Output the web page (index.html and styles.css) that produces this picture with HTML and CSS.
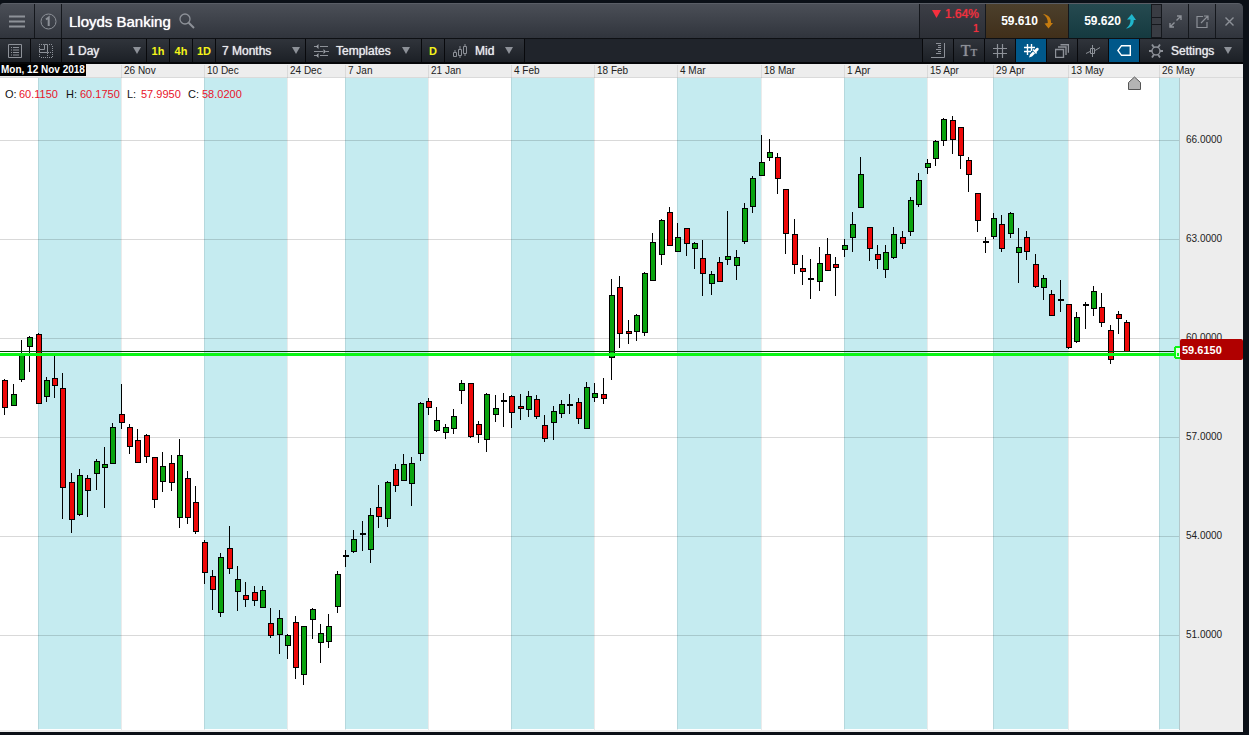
FILE: index.html
```html
<!DOCTYPE html>
<html lang="en">

<head>
  <meta charset="UTF-8">
  <meta name="viewport" content="width=device-width, initial-scale=1.0">
  <title>Lloyds Banking</title>
  <link rel="stylesheet" href="styles.css">
</head>

<body>

  <div class="platform">
    <header class="titlebar">
      <button class="cell menu" aria-label="Menu">
        <svg width="16" height="13" viewBox="0 0 16 13"><path d="M0 1.5h16M0 6.5h16M0 11.5h16" stroke-width="2" /></svg>
      </button>
      <button class="cell link-group" aria-label="Link group 1">
        <svg width="17" height="17" viewBox="0 0 17 17"><circle cx="8.5" cy="8.5" r="7.5" /><path d="M6 6.5l2.7-2V13" stroke-width="2" /></svg>
      </button>
      <div class="cell product">
        <h1>Lloyds Banking</h1>
        <button class="search" aria-label="Search">
          <svg width="16" height="16" viewBox="0 0 16 16"><circle cx="6" cy="6" r="5" stroke-width="1.3" /><path d="M9.7 9.7l5.3 5.3" stroke-width="2" /></svg>
        </button>
      </div>
      <div class="change">
        <span><svg width="9" height="8" viewBox="0 0 9 8"><path d="M0 0h9L4.500 8z" /></svg>1.64%</span>
        <span>1</span>
      </div>
      <button class="price sell">59.610
        <svg width="10" height="15" viewBox="0 0 10 15"><path d="M0 0C5 .500 8.500 4 8 9H10L5.500 14.500L1.500 9.500L4.800 9C5 5 3 2 0 0z" /></svg>
      </button>
      <button class="price buy">59.620
        <svg width="10" height="15" viewBox="0 0 10 15"><path d="M0 14.500C5 14 8 10.500 7.700 6H10L5.800 0L1 5.500H4.500C4.700 9.500 3 12.500 0 14.500z" /></svg>
      </button>
      <div class="grip"><i></i><i></i><i></i><i></i><i></i></div>
      <button class="cell window" aria-label="Expand">
        <svg width="13" height="13" viewBox="0 0 13 13"><path d="M7.500 5.500l4-4M8 1h4v4M5.500 7.500l-4 4M1 8v4h4" stroke-width="1.4" /></svg>
      </button>
      <button class="cell window" aria-label="Pop out">
        <svg width="13" height="13" viewBox="0 0 13 13"><path d="M7 1.500H1v11h10V7M5 8l6.500-6.500M8 1h4v4" stroke-width="1.2" /></svg>
      </button>
      <button class="cell window" aria-label="Close">
        <svg width="9" height="9" viewBox="0 0 9 9"><path d="M.5 .5l8 8M8.500 .5l-8 8" stroke-width="1.4" /></svg>
      </button>
    </header>

    <nav class="toolbar">
      <button class="tool" aria-label="Watch list">
        <svg width="14" height="14" viewBox="0 0 14 14"><path d="M.5.5h13v13H.5zM3 3.500h1M5 3.500h6M3 6h1M5 6h6M3 8.500h1M5 8.500h6M3 11h1M5 11h6" /></svg>
      </button>
      <button class="tool" aria-label="Chart layout">
        <svg width="14" height="14" viewBox="0 0 14 14"><path d="M5.500.500h3v8h-8v-3h5z" /><path d="M0 .500h5M.500 2v3M10 .500h4M13.500 2v12M.500 10v4M2 13.500h11M8.500 9v4M9 8.500h4" stroke-dasharray="1 1" /></svg>
      </button>
      <label class="dropdown interval">
        <select aria-label="Interval"><option>1 Day</option><option>4 Hours</option></select>
        <span class="arrow"></span>
      </label>
      <button class="short">1h</button>
      <button class="short">4h</button>
      <button class="short">1D</button>
      <label class="dropdown period">
        <select aria-label="Period"><option>7 Months</option><option>1 Year</option></select>
        <span class="arrow"></span>
      </label>
      <button class="dropdown templates">
        <svg width="15" height="14" viewBox="0 0 15 14"><path d="M0 2.500h3M6 2.500h8M0 7.500h9M12 7.500h3M0 11.500h3M6 11.500h8" stroke-width="1.2" /><path d="M4.500 0v5L2 2.500zM9.500 5v5l2.500-2.500zM4.500 9v5L2 11.500z" fill="#9da1a8" stroke="none" /></svg>
        <span>Templates</span>
        <span class="arrow"></span>
      </button>
      <button class="short">D</button>
      <label class="dropdown mid">
        <svg width="15" height="14" viewBox="0 0 15 14"><path d="M.5 8.500h3v4h-3zM2 6v2M5.500 5.500h3v6h-3zM7 2v3M7 12v2M10.500 2.500h3v7h-3zM12 0v2M12 10v2" /></svg>
        <select aria-label="Price type"><option>Mid</option><option>Bid</option></select>
        <span class="arrow"></span>
      </label>
      <div class="spacer"></div>
      <button class="tool" aria-label="Price scale">
        <svg width="14" height="15" viewBox="0 0 14 15"><path d="M5 .500h5M7 2.500h3M7 4.500h3M5 6.500h5M7 8.500h3M5 10.500h5M0 14.500h13.500V0" /></svg>
      </button>
      <button class="tool text-tool" aria-label="Text">T<small>T</small></button>
      <button class="tool" aria-label="Grid">
        <svg width="14" height="14" viewBox="0 0 14 14"><path d="M4.500 0v14M9.500 0v14M0 4.500h14M0 9.500h14" stroke-width="1.2" /></svg>
      </button>
      <button class="tool active" aria-label="Grid snapping">
        <svg width="15" height="14" viewBox="0 0 15 14"><path d="M3.500 0v11M7.500 0v7M0 3.500h11M0 7.500h7" stroke-width="1.4" /><path d="M5 13.500l1-3 3-3 2 2-3 3zM8.500 6l1-1 1 1L12.500 4c2-1 2.500 1 2 2l-2 2 .5 1-1 1z" fill="#fff" stroke="none" /></svg>
      </button>
      <button class="tool" aria-label="Layers">
        <svg width="14" height="14" viewBox="0 0 14 14"><path d="M.5 5.500h8v8h-8zM3 3h8v8M5.500.700h8v8" stroke-width="1.4" /></svg>
      </button>
      <button class="tool" aria-label="Crosshair">
        <svg width="14" height="14" viewBox="0 0 14 14"><path d="M4.500 4.500h4v5h-4zM6.500 1v12M0 9.500l4-2M9 6.500l5-3" /></svg>
      </button>
      <button class="tool active" aria-label="Price label">
        <svg width="14" height="11" viewBox="0 0 14 11"><path d="M4.500.700h8.800v9.600H4.500L.900 5.500z" stroke-width="1.4" /></svg>
      </button>
      <button class="dropdown settings">
        <svg width="14" height="14" viewBox="0 0 14 14"><circle cx="7" cy="7" r="4" stroke-width="1.4" /><path d="M0 7h3M11 7h3M3 .500l2 3M11 .500l-2 3M3 13.500l2-3M11 13.500l-2-3" stroke-width="1.8" /></svg>
        <span>Settings</span>
        <span class="arrow"></span>
      </button>
    </nav>

    <main>
      <svg class="chart" id="chart" viewBox="0 64 1243 668" role="img" aria-label="Lloyds Banking daily candles"></svg>
    </main>
  </div>

  <script src="chart.js"></script>

</body>

</html>
```

FILE: styles.css
```css
* {
  margin: 0;
  padding: 0;
  box-sizing: border-box;
}

body {
  font-family: "Liberation Sans", Arial, sans-serif;
  font-size: 12px;
  background-color: #0b1017;
  color: #e8eaed;
}

button,
select {
  font: inherit;
  color: inherit;
  background: none;
  border: none;
  cursor: pointer;
}

svg {
  display: block;
  fill: none;
  stroke: #8d9198;
}

.platform {
  padding: 3px 6px 0 0;
}

/* Title bar */
.titlebar {
  display: flex;
  height: 36px;
  background: linear-gradient(#4b4f57, #30343c);
  border-top: 1px solid #5a5e66;
  border-bottom: 1px solid #0e1014;
  border-radius: 4px 5px 0 0;
}

.cell {
  display: flex;
  align-items: center;
  justify-content: center;
  border-right: 1px solid #14171c;
}

.menu {
  width: 35px;
}

.link-group {
  width: 27px;
}

.product {
  flex: 1;
  justify-content: flex-start;
  gap: 8px;
  padding-left: 7px;
}

h1 {
  font-size: 15px;
  font-weight: 400;
  color: #fff;
  text-shadow: 0 0 1px #fff;
}

.change {
  width: 65px;
  padding: 3px 6px 0 0;
  line-height: 14px;
  text-align: right;
  color: #f5303e;
  background: linear-gradient(#3c3e46, #2c2f36);
  text-shadow: 0 0 1px #f5303e;
}

.change span {
  display: block;
}

.change svg {
  display: inline-block;
  margin-right: 4px;
  fill: #f5303e;
  stroke: none;
}

.change span + span {
  font-size: 11px;
}

.price {
  display: flex;
  align-items: center;
  justify-content: center;
  gap: 5px;
  width: 83px;
  font-weight: 700;
  color: #fff;
  border-left: 1px solid #14171c;
}

.price svg {
  stroke: none;
}

.sell {
  background: linear-gradient(#4c402c, #402f1a);
}

.sell svg {
  fill: #c67c10;
}

.buy {
  background: linear-gradient(#264a50, #153a40);
}

.buy svg {
  fill: #20b6cc;
}

.grip {
  display: flex;
  flex-direction: column;
  justify-content: space-evenly;
  width: 11px;
  padding: 0 1px;
  background-color: #15181d;
}

.grip i {
  height: 6px;
  background-color: #393c43;
}

.window {
  width: 27px;
}

.window:last-child {
  border-right: none;
}

/* Toolbar */
.toolbar {
  display: flex;
  height: 25px;
  background-color: #20242b;
  border-bottom: 2px solid #050608;
}

.tool,
.short,
.dropdown {
  display: flex;
  align-items: center;
  justify-content: center;
  background: linear-gradient(#30343b, #1c2026);
  border-right: 1px solid #08090c;
}

.tool {
  width: 31px;
}

.short {
  width: 23px;
  font-size: 11px;
  font-weight: 700;
  color: #f4f41a;
}

.dropdown {
  gap: 8px;
  justify-content: flex-start;
  padding: 0 6px;
  text-shadow: 0 0 1px #e8eaed;
}

.dropdown select {
  appearance: none;
  flex: 1;
  min-width: 0;
  text-shadow: inherit;
}

.dropdown option {
  color: #111;
}

.arrow {
  border: 4px solid transparent;
  border-top: 7px solid #8d9198;
  border-bottom: none;
}

.interval {
  width: 85px;
  padding-right: 5px;
}

.period {
  width: 90px;
  padding-right: 5px;
}

.templates {
  width: 116px;
  padding-left: 8px;
  gap: 7px;
}

.templates .arrow {
  margin-left: auto;
  margin-right: 5px;
}

.mid {
  width: 80px;
  padding: 0 11px 0 8px;
  gap: 7px;
}

.spacer {
  flex: 1;
  border-right: 1px solid #08090c;
}

.tool.active {
  background: #00588a;
}

.active svg {
  stroke: #fff;
}

.text-tool {
  align-items: baseline;
  padding-top: 3px;
  font-family: "Liberation Serif", serif;
  font-size: 16px;
  color: #8d9198;
  text-shadow: 0 0 1px #8d9198;
}

.text-tool small {
  font-size: 11px;
}

.settings {
  width: 103px;
  padding-left: 9px;
  border-right: none;
}

.settings .arrow {
  margin-left: auto;
  margin-right: 5px;
}

/* Chart */
.chart {
  width: 100%;
  height: auto;
  background-color: #ededed;
  stroke: none;
  shape-rendering: crispEdges;
}

.plot {
  fill: #fff;
}

.band {
  fill: #c5ebf0;
}

.grid-line {
  stroke: #000;
  stroke-opacity: 0.15;
}

.date-line {
  stroke: #000;
  stroke-opacity: 0.08;
}

.axis-line {
  stroke: #b4c8cb;
}

.axis-text {
  font-size: 10px;
  fill: #222;
}

.date-tag {
  fill: #000;
}

.date-tag-text {
  font-size: 10px;
  font-weight: 700;
  fill: #fff;
}

.ohlc {
  font-size: 11px;
  fill: #111;
}

.ohlc .value {
  fill: #e8142a;
}

.candle {
  stroke: #000;
}

.up {
  fill: #0aa30f;
}

.down {
  fill: #ee0808;
}

.price-line {
  stroke: #083c08;
}

.level-line {
  stroke: #0cf516;
  stroke-width: 3;
}

.handle {
  fill: #e6ffe6;
  stroke: #0cf516;
  stroke-width: 2;
}

.marker {
  fill: #b4b4b4;
  stroke: #555;
  shape-rendering: auto;
}

.price-tag {
  fill: #b00000;
  shape-rendering: auto;
}

.price-tag-text {
  font-size: 11px;
  font-weight: 700;
  fill: #fff;
}
```

FILE: chart.js
```js
const chart = document.getElementById("chart");

const PLOT_RIGHT = 1180;
const PLOT_TOP = 78;
const PLOT_BOTTOM = 730;

const dates = [
  [121, "26 Nov"], [204, "10 Dec"], [287, "24 Dec"], [345, "7 Jan"], [428, "21 Jan"],
  [511, "4 Feb"], [594, "18 Feb"], [677, "4 Mar"], [761, "18 Mar"], [844, "1 Apr"],
  [927, "15 Apr"], [993, "29 Apr"], [1068, "13 May"], [1159, "26 May"]
];

const bands = [
  [38, 121], [204, 287], [345, 428], [511, 594], [677, 761], [844, 927], [993, 1068], [1159, 1179]
];

const prices = [
  [140, "66.0000"], [239, "63.0000"], [338, "60.0000"], [437, "57.0000"], [536, "54.0000"], [635, "51.0000"]
];

// x, high, body top, body bottom, low, direction (1 up, 0 down)
const candles = [
  [5, 379, 380, 408, 415, 0], [14, 384, 394, 406, 406, 1], [22, 340, 353, 380, 382, 1], [30, 336, 337, 347, 372, 1],
  [39, 333, 334, 404, 404, 0], [47, 377, 380, 397, 402, 1], [55, 354, 378, 386, 398, 0], [63, 373, 388, 488, 519, 0],
  [72, 473, 482, 520, 533, 0], [80, 469, 475, 515, 516, 1], [88, 475, 478, 491, 517, 0], [97, 459, 461, 474, 490, 1],
  [105, 447, 464, 468, 508, 1], [113, 423, 427, 464, 464, 1], [122, 384, 414, 423, 429, 0], [130, 424, 427, 447, 454, 0],
  [138, 429, 440, 463, 463, 0], [147, 434, 435, 457, 463, 0], [155, 457, 457, 500, 508, 0], [163, 452, 466, 482, 492, 1],
  [172, 455, 463, 483, 491, 0], [180, 439, 455, 518, 528, 1], [188, 471, 478, 518, 524, 0], [196, 486, 502, 532, 534, 0],
  [205, 540, 542, 573, 584, 0], [213, 570, 576, 590, 610, 0], [221, 553, 557, 613, 617, 1], [230, 526, 548, 569, 574, 0],
  [238, 566, 579, 592, 611, 1], [246, 582, 595, 600, 607, 0], [255, 586, 592, 601, 606, 0], [263, 586, 590, 608, 608, 1],
  [271, 608, 623, 636, 638, 0], [280, 610, 618, 635, 654, 1], [288, 634, 635, 646, 659, 1], [296, 616, 622, 668, 679, 0],
  [304, 626, 626, 675, 685, 1], [313, 608, 609, 620, 639, 1], [321, 624, 633, 643, 663, 1], [329, 614, 626, 642, 648, 1],
  [338, 571, 574, 607, 613, 1], [346, 550, 555, 557, 567, 1], [354, 530, 539, 552, 553, 1], [363, 521, 533, 535, 551, 1],
  [371, 508, 515, 550, 563, 1], [379, 485, 507, 517, 528, 0], [388, 481, 482, 519, 527, 1], [396, 464, 469, 486, 492, 0],
  [404, 454, 464, 481, 481, 1], [412, 457, 463, 484, 506, 1], [421, 402, 403, 454, 461, 1], [429, 398, 401, 408, 415, 0],
  [437, 407, 420, 431, 432, 1], [446, 424, 427, 433, 439, 1], [454, 409, 416, 429, 434, 1], [462, 380, 383, 391, 404, 1],
  [471, 383, 383, 437, 438, 0], [479, 421, 424, 435, 443, 0], [487, 393, 394, 440, 452, 1], [496, 395, 408, 415, 422, 1],
  [504, 393, 400, 402, 427, 1], [512, 395, 396, 413, 428, 0], [521, 394, 406, 409, 420, 0], [529, 391, 396, 410, 417, 1],
  [537, 395, 399, 417, 419, 0], [545, 415, 425, 439, 442, 0], [554, 406, 411, 423, 440, 1], [562, 400, 404, 414, 418, 1],
  [570, 394, 404, 406, 414, 1], [579, 398, 402, 419, 424, 0], [587, 382, 387, 429, 429, 1], [595, 383, 393, 398, 402, 1],
  [604, 378, 394, 399, 404, 0], [612, 279, 295, 358, 380, 1], [620, 276, 287, 334, 348, 0], [629, 320, 331, 334, 344, 0],
  [637, 314, 315, 332, 341, 1], [645, 272, 273, 333, 336, 1], [653, 233, 242, 281, 281, 1], [662, 219, 220, 255, 265, 1],
  [670, 207, 212, 246, 246, 0], [678, 223, 237, 252, 252, 1], [687, 228, 228, 244, 256, 0], [695, 242, 243, 249, 269, 1],
  [703, 240, 258, 274, 296, 0], [712, 271, 274, 284, 295, 1], [720, 257, 262, 282, 282, 0], [728, 211, 256, 260, 265, 1],
  [737, 250, 257, 266, 280, 1], [745, 203, 208, 242, 244, 1], [753, 176, 178, 207, 213, 1], [762, 135, 162, 176, 176, 1],
  [770, 139, 152, 158, 161, 1], [778, 153, 157, 179, 194, 0], [786, 189, 189, 234, 254, 0], [795, 219, 234, 265, 274, 0],
  [803, 255, 268, 272, 285, 0], [811, 259, 278, 280, 299, 1], [820, 247, 263, 282, 291, 1], [828, 238, 254, 271, 271, 0],
  [836, 257, 264, 268, 296, 0], [845, 239, 245, 250, 257, 1], [853, 212, 224, 238, 252, 1], [861, 157, 174, 208, 208, 1],
  [870, 227, 227, 249, 261, 0], [878, 245, 254, 260, 269, 0], [886, 245, 252, 270, 278, 1], [894, 227, 234, 258, 259, 1],
  [903, 231, 237, 244, 249, 0], [911, 197, 200, 232, 236, 1], [919, 173, 180, 205, 207, 1], [928, 159, 163, 168, 174, 1],
  [936, 140, 141, 159, 166, 1], [944, 118, 119, 141, 146, 1], [953, 116, 120, 140, 154, 0], [961, 127, 127, 156, 169, 0],
  [969, 157, 160, 175, 192, 0], [978, 193, 193, 221, 232, 0], [986, 237, 241, 243, 253, 1], [994, 213, 218, 237, 239, 1],
  [1002, 215, 224, 249, 252, 0], [1011, 212, 213, 234, 238, 1], [1019, 228, 247, 253, 283, 1], [1027, 231, 237, 252, 260, 0],
  [1036, 254, 264, 287, 288, 0], [1044, 275, 278, 288, 300, 1], [1052, 290, 294, 316, 316, 0], [1061, 280, 299, 301, 312, 1],
  [1069, 304, 304, 348, 349, 0], [1077, 312, 317, 342, 343, 1], [1086, 302, 304, 306, 329, 1], [1094, 286, 291, 309, 316, 1],
  [1102, 293, 307, 323, 327, 0], [1111, 325, 330, 360, 364, 0], [1119, 311, 314, 319, 334, 0], [1127, 320, 322, 352, 352, 0]
];

function add(tag, className, attrs, text) {
  const el = document.createElementNS("http://www.w3.org/2000/svg", tag);
  el.setAttribute("class", className);
  for (const key in attrs) {
    el.setAttribute(key, attrs[key]);
  }
  if (text) {
    el.textContent = text;
  }
  chart.appendChild(el);
  return el;
}

function line(className, x1, y1, x2, y2) {
  add("line", className, { x1, y1, x2, y2 });
}

// Background, bands and grid
add("rect", "plot", { x: 0, y: PLOT_TOP, width: PLOT_RIGHT, height: PLOT_BOTTOM - PLOT_TOP });
bands.forEach(([from, to]) => {
  add("rect", "band", { x: from, y: PLOT_TOP, width: to - from, height: PLOT_BOTTOM - PLOT_TOP - 1 });
});
line("date-line", 0, PLOT_TOP - 0.5, 1243, PLOT_TOP - 0.5);
line("date-line", 38.5, PLOT_TOP, 38.5, PLOT_BOTTOM);
dates.forEach(([x, label]) => {
  line("date-line", x + 0.5, 65, x + 0.5, PLOT_BOTTOM);
  add("text", "axis-text", { x: x + 3, y: 74 }, label);
});
prices.forEach(([y, label]) => {
  line("grid-line", 0, y + 0.5, PLOT_RIGHT, y + 0.5);
  add("text", "axis-text", { x: 1186, y: y + 3 }, label);
});
line("axis-line", PLOT_RIGHT - 0.5, PLOT_TOP, PLOT_RIGHT - 0.5, PLOT_BOTTOM);

// Candles
candles.forEach(([x, high, top, bottom, low, up]) => {
  line("candle", x - 0.5, high, x - 0.5, low);
  add("rect", "candle " + (up ? "up" : "down"), { x: x - 2.5, y: top + 0.5, width: 5, height: bottom - top - 1 });
});

// Current price and alert level
line("price-line", 0, 351.5, PLOT_RIGHT, 351.5);
line("level-line", 0, 354.5, PLOT_RIGHT, 354.5);
add("rect", "handle", { x: 1175, y: 347, width: 8, height: 11, rx: 2 });
line("level-line", 1177, 354.5, 1179, 354.5);
add("rect", "price-tag", { x: 1180, y: 339, width: 63, height: 21, rx: 2 });
add("text", "price-tag-text", { x: 1182, y: 354 }, "59.6150");

// Date tag and last bar marker
add("rect", "date-tag", { x: 0, y: 64, width: 86, height: 12 });
add("text", "date-tag-text", { x: 1, y: 73 }, "Mon, 12 Nov 2018");
add("path", "marker", { d: "M1128.5 89.5v-7l6-5.500l6 5.500v7z" });

// Open, high, low, close
[["O:", 5, "60.1150", 19], ["H:", 66, "60.1750", 80], ["L:", 127, "57.9950", 141], ["C:", 188, "58.0200", 202]].forEach(([name, x, value, valueX]) => {
  add("text", "ohlc", { x, y: 98 }, name);
  const el = add("text", "ohlc", { x: valueX, y: 98 });
  el.innerHTML = `<tspan class="value">${value}</tspan>`;
});
```
